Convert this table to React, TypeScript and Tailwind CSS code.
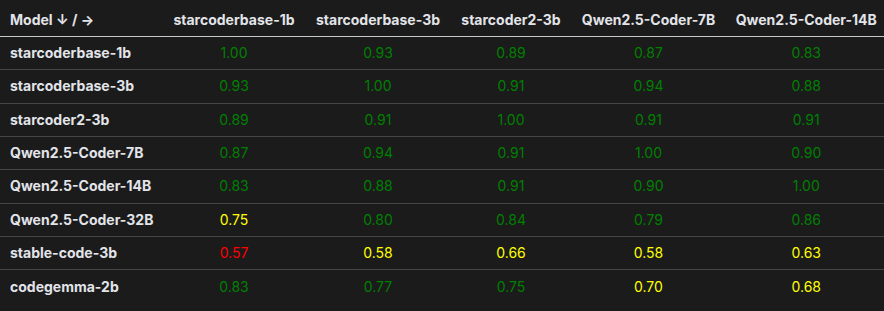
import React from "react";

type C = "g" | "y" | "r";
const cols = [
  "starcoderbase-1b",
  "starcoderbase-3b",
  "starcoder2-3b",
  "Qwen2.5-Coder-7B",
  "Qwen2.5-Coder-14B",
];

const rows: { name: string; vals: [string, C][] }[] = [
  { name: "starcoderbase-1b", vals: [["1.00", "g"], ["0.93", "g"], ["0.89", "g"], ["0.87", "g"], ["0.83", "g"]] },
  { name: "starcoderbase-3b", vals: [["0.93", "g"], ["1.00", "g"], ["0.91", "g"], ["0.94", "g"], ["0.88", "g"]] },
  { name: "starcoder2-3b", vals: [["0.89", "g"], ["0.91", "g"], ["1.00", "g"], ["0.91", "g"], ["0.91", "g"]] },
  { name: "Qwen2.5-Coder-7B", vals: [["0.87", "g"], ["0.94", "g"], ["0.91", "g"], ["1.00", "g"], ["0.90", "g"]] },
  { name: "Qwen2.5-Coder-14B", vals: [["0.83", "g"], ["0.88", "g"], ["0.91", "g"], ["0.90", "g"], ["1.00", "g"]] },
  { name: "Qwen2.5-Coder-32B", vals: [["0.75", "y"], ["0.80", "g"], ["0.84", "g"], ["0.79", "g"], ["0.86", "g"]] },
  { name: "stable-code-3b", vals: [["0.57", "r"], ["0.58", "y"], ["0.66", "y"], ["0.58", "y"], ["0.63", "y"]] },
  { name: "codegemma-2b", vals: [["0.83", "g"], ["0.77", "g"], ["0.75", "g"], ["0.70", "y"], ["0.68", "y"]] },
];

const colorClass: Record<C, string> = {
  g: "text-[#008000]",
  y: "text-[#ffff00]",
  r: "text-[#ff0000]",
};

const grid =
  "grid grid-cols-[162.5px_143px_145px_121px_154px_158.5px]";

export default function App() {
  return (
    <div
      className="w-[884px] h-[311px] bg-[#1b1b1b] text-[14px] text-[#e2e4e9] overflow-hidden"
      style={{ fontFamily: "Inter, 'Liberation Sans', sans-serif" }}
    >
      <div className={`${grid} h-[37px] border-b border-[#c8c8c8] font-bold leading-5 pt-[10px]`}>
        <div className="pl-[10px] whitespace-nowrap">Model ↓ / →</div>
        {cols.map((c, i) => (
          <div key={c} className={`text-center whitespace-nowrap ${i === 4 ? "pl-[3px]" : ""}`}>
            {c}
          </div>
        ))}
      </div>
      {rows.map((r, ri) => (
        <div
          key={r.name}
          className={`${grid} h-[33.333px] items-center leading-5 ${
            ri < rows.length - 1 ? "border-b border-[#464646]" : ""
          }`}
        >
          <div className="pl-[10px] font-bold whitespace-nowrap">{r.name}</div>
          {r.vals.map(([v, c], i) => (
            <div
              key={i}
              className={`text-center ${colorClass[c]} ${i === 4 ? "pl-[3px]" : ""}`}
            >
              {v}
            </div>
          ))}
        </div>
      ))}
    </div>
  );
}
